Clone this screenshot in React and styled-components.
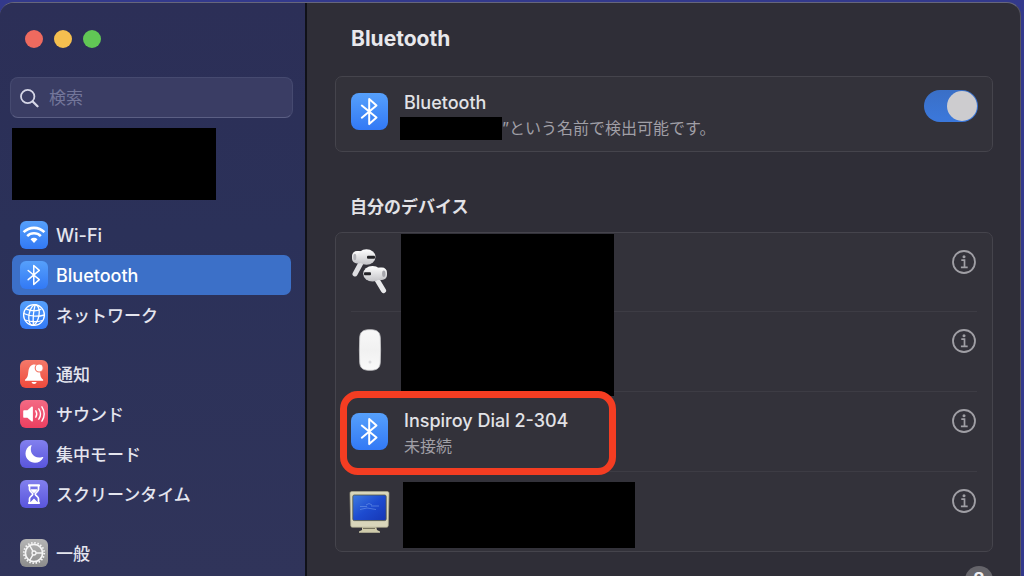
import React from "react";
import styled, { createGlobalStyle, css } from "styled-components";

const GlobalStyle = createGlobalStyle`
  *, *::before, *::after { box-sizing: border-box; }
  body {
    margin: 0;
    background: #33398c;
    color: #e2e2e6;
    font-family: Inter, "Noto Sans CJK JP", sans-serif;
    font-size: 18px;
    line-height: 24px;
  }
  h1, h2, h3, p, ul { margin: 0; padding: 0; }
  ul { list-style: none; }
  button { font: inherit; border: 0; padding: 0; background: none; cursor: pointer; }
`;

const Desktop = styled.div`
  height: 100vh;
  padding: 2px 3px 0 0;
  overflow: hidden;
`;

const Window = styled.div`
  display: flex;
  height: 100%;
  overflow: hidden;
  border-top: 1px solid #66667c;
  border-right: 1px solid #55545c;
  border-radius: 14px 14px 0 0;
  background: #2f2e37;
`;

const Sidebar = styled.aside`
  flex: 0 0 307px;
  padding: 27px 12px 0 10px;
  border-right: 2px solid #101118;
  background: linear-gradient(#2c2f57, #2b3159 40%, #30345a);
  overflow: hidden;
`;

const TrafficLights = styled.div`
  display: flex;
  gap: 11px;
  padding-left: 15px;
  margin-bottom: 29px;
`;

const Light = styled.button`
  width: 18px;
  height: 18px;
  border-radius: 50%;
  && { background: ${(p) => p.$color}; }
`;

const SearchBox = styled.label`
  display: flex;
  align-items: center;
  gap: 10px;
  height: 41px;
  padding: 0 9px;
  border: 1px solid #464a70;
  border-bottom-color: #5b5f84;
  border-radius: 8px;
  background: #3a3d64;
  svg { flex: none; }
`;

const SearchInput = styled.input`
  flex: 1;
  min-width: 0;
  padding: 0;
  border: 0;
  outline: 0;
  background: none;
  color: #e2e2e6;
  font: inherit;
  font-size: 17px;
  &::placeholder { color: #73769a; opacity: 1; }
`;

const AccountMask = styled.div`
  width: 204px;
  height: 72px;
  margin: 10px 0 15px 2px;
  background: #000;
`;

const NavGroup = styled.ul`
  margin-bottom: 19px;
  && { padding: 0 2px; }
`;

const NavLink = styled.a`
  display: flex;
  align-items: center;
  gap: 8px;
  height: 40px;
  padding: 0 8px;
  border-radius: 7px;
  color: #e4e5ee;
  text-decoration: none;
  font-size: ${(p) => (p.$latin ? 18 : 17)}px;
  font-weight: 500;
  ${(p) => p.$active && css`
    background: #3c70c8;
    color: #fff;
  `}
`;

const NavLabel = styled.span`
  padding-top: 2px;
`;

const Tile = styled.span`
  flex: none;
  display: flex;
  width: ${(p) => p.$size}px;
  height: ${(p) => p.$size}px;
  border-radius: ${(p) => (p.$size > 30 ? 8 : 6)}px;
  background: linear-gradient(${(p) => p.$from}, ${(p) => p.$to});
`;

const Main = styled.main`
  flex: 1;
  min-width: 0;
  padding: 23px 27px 0 28px;
  overflow: hidden;
`;

const Title = styled.h1`
  padding-left: 16px;
  margin-bottom: 24px;
  font-size: 21px;
  line-height: 26px;
  font-weight: 700;
  color: #e8e8ec;
`;

const Card = styled.section`
  position: relative;
  border: 1px solid #45444c;
  border-radius: 7px;
  background: #33323a;
`;

const StatusCard = styled(Card)`
  display: flex;
  align-items: flex-start;
  gap: 16px;
  min-height: 76px;
  padding: 13px 14px 0 15px;
  & > ${Tile} { margin-top: 3px; }
`;

const TextBlock = styled.div`
  flex: 1;
  min-width: 0;
`;

const Name = styled.h3`
  font-size: 18px;
  line-height: 26px;
  font-weight: 500;
`;

const Detail = styled.p`
  display: flex;
  align-items: center;
  font-size: 16px;
  line-height: 24px;
  color: #a09fa6;
`;

const NameMask = styled.span`
  width: 102px;
  height: 23px;
  margin-left: -4px;
  background: #000;
`;

const Switch = styled.input`
  appearance: none;
  display: flex;
  align-items: center;
  justify-content: flex-end;
  width: 54px;
  height: 32px;
  margin: 0;
  padding: 1px;
  border-radius: 16px;
  background: linear-gradient(#3a6fc6, #3b78dc);
  &::before {
    content: "";
    width: 30px;
    height: 30px;
    border-radius: 50%;
    background: #cdcccf;
  }
  &:not(:checked) { justify-content: flex-start; background: #55545c; }
`;

const SectionTitle = styled.h2`
  padding-left: 15px;
  margin: 43px 0 13px;
  font-size: 17px;
  line-height: 24px;
  font-weight: 700;
`;

const DeviceRow = styled.li`
  display: flex;
  align-items: center;
  gap: 16px;
  height: 80px;
  margin: 0 15px;
  & + & { border-top: 1px solid #3d3c44; }
  &:first-child { height: 78px; }
  & > ${TextBlock} { padding-top: 3px; }
`;

const DeviceArt = styled.span`
  flex: none;
  display: flex;
  justify-content: center;
  width: 37px;
  padding-bottom: ${(p) => (p.$raised ? 3 : 0)}px;
  svg { flex: none; }
`;

const InfoButton = styled.button`
  align-self: flex-start;
  width: 26px;
  height: 26px;
  margin-top: 16px;
`;

const Mask = styled.div`
  position: absolute;
  top: ${(p) => p.$top}px;
  left: ${(p) => p.$left}px;
  width: ${(p) => p.$width}px;
  height: ${(p) => p.$height}px;
  background: #000;
`;

const Highlight = styled.div`
  position: absolute;
  top: 158px;
  left: 4px;
  width: 276px;
  height: 84px;
  border: 7px solid #f43d22;
  border-radius: 18px;
  pointer-events: none;
`;

const Footer = styled.div`
  display: flex;
  justify-content: flex-end;
  margin-top: 14px;
`;

const HelpButton = styled.button`
  width: 28px;
  height: 28px;
  border-radius: 50%;
  && {
    background: #65646a;
    color: #f0f0f2;
    font-size: 20px;
    font-weight: 600;
    line-height: 28px;
  }
`;

const BLUE = ["#56a0fb", "#3279f5"];
const INDIGO = ["#8280ee", "#5955dc"];

const glyphs = {
  wifi: (
    <g fill="none" stroke="#fff" strokeWidth="2.6">
      <path d="M3.6 11.200a14.700 14.700 0 0 1 20.800 0" />
      <path d="M7.200 15.100a9.600 9.600 0 0 1 13.600 0" />
      <path d="M14 21.900l-3.500-3.600a5 5 0 0 1 7 0z" fill="#fff" stroke="none" />
    </g>
  ),
  network: (
    <g fill="none" stroke="#fff" strokeWidth="1.3">
      <circle cx="14" cy="14" r="10.400" />
      <ellipse cx="14" cy="14" rx="5" ry="10.400" transform="rotate(10 14 14)" />
      <path d="M15.200 3.700C13.500 10 12.800 17.500 13.400 24.400M3.800 12.500c6 2.800 14 3.300 20.500 1.500M5.800 7.800c5 2.200 11 2.600 15.500.4M5 19c5.500 2 12 2.200 17.500.5" />
    </g>
  ),
  bell: (
    <>
      <path d="M5.200 19.500c2.800-2 2.700-4.500 3.200-8.200.5-4 2.800-6.700 6-6.700 3.600 0 5.300 3 5.600 6.700.3 3.700.3 6.200 3 8.200.5.8.2 1.300-.7 1.300H5.800c-.9 0-1.100-.6-.6-1.300zM11.500 22h5.200c-.4 1.300-1.400 1.900-2.600 1.900s-2.200-.6-2.600-1.900z" fill="#fff" />
      <circle cx="19.200" cy="8" r="4" fill="#fff" stroke="#f3705f" strokeWidth="1.100" />
    </>
  ),
  sound: (
    <>
      <path d="M3.200 11.300c0-.7.400-1.100 1-1.100h3.200l4-3.500c.7-.6 1.500-.3 1.500.6v13.400c0 .9-.8 1.200-1.500.6l-4-3.500H4.200c-.6 0-1-.4-1-1.100z" fill="#fff" />
      <path d="M15.800 10.800c1.200 2 1.200 4.400 0 6.400M18.800 8.800c2.100 3.200 2.100 7.200 0 10.400M21.900 6.800c2.900 4.500 2.900 9.900 0 14.400" fill="none" stroke="#fff" strokeWidth="1.400" strokeLinecap="round" />
    </>
  ),
  moon: (
    <path d="M10.800 5.200c.6-.3 1 0 .7.600-2.400 5.800 1.600 12.400 8.900 11.700.9-.1 1.700-.3 2.200-.5.600-.2.900.2.600.700-1.600 3.100-4.600 5-8.200 5C9.800 22.700 5.500 18.700 5.500 13.500c0-3.700 2-6.900 5.300-8.300z" fill="#fff" />
  ),
  hourglass: (
    <g fill="none" stroke="#fff" strokeWidth="1.700" strokeLinejoin="round">
      <path d="M9 5.400h10M9 23h10" strokeWidth="2.200" strokeLinecap="round" />
      <path d="M9.500 6v3.600c0 2 3.200 3 3.200 4.600s-3.200 2.600-3.200 4.600V22M18.500 6v3.600c0 2-3.200 3-3.200 4.600s3.200 2.600 3.200 4.600V22" />
      <path d="M10.500 9.200h7c0 1.500-2.800 2.800-3.500 4.500-.7-1.700-3.500-3-3.500-4.500zM10.500 22l3.500-3.500 3.500 3.500z" fill="#fff" stroke="none" />
    </g>
  ),
  gear: (
    <g fill="none" stroke="#f5f5f5">
      <circle cx="14" cy="14" r="8.600" strokeWidth="1.700" />
      <circle cx="14" cy="14" r="10.200" strokeWidth="1.800" strokeDasharray="1.500 1.700" />
      <circle cx="14" cy="14" r="2" strokeWidth="1.300" />
      <path d="M16 14h6.600M13 12.300L9.700 6.600M13 15.700l-3.300 5.700" strokeWidth="1.400" />
    </g>
  ),
};

function BluetoothTile({ size }) {
  return (
    <Tile $size={size} $from={BLUE[0]} $to={BLUE[1]}>
      <svg width={size} height={size} viewBox="0 0 37 37" aria-hidden="true">
        <path
          d="M10.800 12.600L25.500 24.600l-7.300 6.500v-25.200L25.500 12.400 10.800 24.700"
          fill="none"
          stroke="#fff"
          strokeWidth="2"
          strokeLinejoin="round"
          strokeLinecap="round"
        />
      </svg>
    </Tile>
  );
}

function NavIcon({ name, colors }) {
  if (name === "bluetooth") return <BluetoothTile size={28} />;
  return (
    <Tile $size={28} $from={colors[0]} $to={colors[1]}>
      <svg width="28" height="28" viewBox="0 0 28 28" aria-hidden="true">{glyphs[name]}</svg>
    </Tile>
  );
}

function Info() {
  return (
    <InfoButton aria-label="情報">
      <svg width="26" height="26" viewBox="0 0 26 26" aria-hidden="true">
        <g fill="none" stroke="#a09fa5" strokeWidth="1.800">
          <circle cx="13" cy="13" r="11" />
          <path d="M10.300 11.200h3.200v7M9.900 18.300h6.800" strokeWidth="1.700" />
        </g>
        <circle cx="13" cy="7.700" r="1.500" fill="#a09fa5" />
      </svg>
    </InfoButton>
  );
}

function Earbuds() {
  return (
    <svg width="37" height="48" viewBox="0 0 37 48" aria-hidden="true">
      <defs>
        <linearGradient id="bud" x1="0" y1="0" x2="0" y2="1">
          <stop offset="0" stopColor="#fff" />
          <stop offset="1" stopColor="#c3c3c7" />
        </linearGradient>
      </defs>
      <path d="M10.500 15L4 27" stroke="#dedee1" strokeWidth="5" strokeLinecap="round" />
      <rect x="1" y="4" width="12" height="12.500" rx="5" fill="url(#bud)" />
      <ellipse cx="15.500" cy="10" rx="9" ry="7.800" fill="url(#bud)" />
      <ellipse cx="3.800" cy="10" rx="1.500" ry="3.300" fill="#b4b4b9" />
      <rect x="16" y="8.700" width="8" height="3" rx="1" fill="#222226" />
      <path d="M25 31l7.500 12.500" stroke="#e8e8ea" strokeWidth="5.200" strokeLinecap="round" />
      <rect x="24" y="20.500" width="12" height="12.500" rx="5" fill="url(#bud)" />
      <ellipse cx="21.500" cy="26.700" rx="9.300" ry="7.800" fill="url(#bud)" />
      <ellipse cx="32.800" cy="26.700" rx="1.700" ry="3.300" fill="#a6a6ac" />
      <rect x="13" y="25.200" width="7" height="3" rx="1" fill="#222226" />
    </svg>
  );
}

function Mouse() {
  return (
    <svg width="24" height="44" viewBox="0 0 24 44" aria-hidden="true">
      <defs>
        <linearGradient id="shell" x1="0" y1="0" x2="0" y2="1">
          <stop offset="0" stopColor="#f8f8f8" />
          <stop offset="0.500" stopColor="#f1f1f1" />
          <stop offset="1" stopColor="#fafafa" />
        </linearGradient>
      </defs>
      <path d="M12 1.700c7.500 0 10 2.300 10.300 8.300.4 8 .4 16 0 24-.3 6-2.800 8.300-10.300 8.300S2 40 1.700 34c-.4-8-.4-16 0-24C2 4 4.500 1.700 12 1.700z" fill="url(#shell)" stroke="#c9c9cc" strokeWidth=".8" />
      <circle cx="12" cy="34" r="1.500" fill="#dcdcdf" />
    </svg>
  );
}

function Monitor() {
  return (
    <svg width="41" height="44" viewBox="0 0 41 44" aria-hidden="true">
      <defs>
        <linearGradient id="screen" x1="0" y1="0" x2="1" y2="1">
          <stop offset="0" stopColor="#3f7be0" />
          <stop offset="0.500" stopColor="#1d4bd0" />
          <stop offset="1" stopColor="#1636b4" />
        </linearGradient>
      </defs>
      <path d="M13 36h14l1 4 3 1.500v1.200H10v-1.200l3-1.500z" fill="#cfcbab" />
      <path d="M3 1.500h35c1.500 0 2 .7 2 2L39.300 35c0 1.500-.6 2.300-2 2.300H3.700c-1.400 0-2-.8-2-2.300L1 3.500c0-1.300.5-2 2-2z" fill="#d9d6bb" stroke="#a9a68b" strokeWidth=".7" />
      <rect x="3.800" y="5" width="33.400" height="25.600" rx="1.500" fill="url(#screen)" stroke="#55583f" strokeWidth=".8" />
      <path d="M11 16.500h7M17 15l3-1.500 3 1.500M22 16h8M11 19.500l7-1.500 9 1.500" stroke="#6f97e8" strokeWidth=".6" fill="none" />
      <path d="M14 38.500h12" stroke="#77745f" strokeWidth="1" />
    </svg>
  );
}

const navGroups = [
  [
    { label: "Wi-Fi", icon: "wifi", colors: BLUE, latin: true },
    { label: "Bluetooth", icon: "bluetooth", latin: true, active: true },
    { label: "ネットワーク", icon: "network", colors: BLUE },
  ],
  [
    { label: "通知", icon: "bell", colors: ["#f5796a", "#ee4a3c"] },
    { label: "サウンド", icon: "sound", colors: ["#f36a84", "#ec3f60"] },
    { label: "集中モード", icon: "moon", colors: INDIGO },
    { label: "スクリーンタイム", icon: "hourglass", colors: INDIGO },
  ],
  [{ label: "一般", icon: "gear", colors: ["#b5b5b5", "#8c8c8c"] }],
];

const devices = [
  { id: "earbuds", art: <Earbuds />, raised: true },
  { id: "mouse", art: <Mouse />, raised: true },
  { id: "dial", art: <BluetoothTile size={37} />, name: "Inspiroy Dial 2-304", status: "未接続" },
  { id: "monitor", art: <Monitor /> },
];

export default function App() {
  return (
    <Desktop>
      <GlobalStyle />
      <Window>
        <Sidebar>
          <TrafficLights>
            <Light $color="#ee6a5f" aria-label="閉じる" />
            <Light $color="#f5bf4f" aria-label="しまう" />
            <Light $color="#61c755" aria-label="拡大" />
          </TrafficLights>
          <SearchBox>
            <svg width="19" height="20" viewBox="0 0 19 20" fill="none" stroke="#d5d6e6" strokeLinecap="round" aria-hidden="true">
              <circle cx="7.700" cy="8.500" r="6.700" strokeWidth="1.800" />
              <path d="M12.700 13.500l4.800 4.800" strokeWidth="2.300" />
            </svg>
            <SearchInput type="search" placeholder="検索" aria-label="検索" />
          </SearchBox>
          <AccountMask />
          <nav>
            {navGroups.map((group, i) => (
              <NavGroup key={i}>
                {group.map((item) => (
                  <li key={item.label}>
                    <NavLink
                      href="#"
                      $latin={item.latin}
                      $active={item.active}
                      aria-current={item.active ? "page" : undefined}
                    >
                      <NavIcon name={item.icon} colors={item.colors} />
                      <NavLabel>{item.label}</NavLabel>
                    </NavLink>
                  </li>
                ))}
              </NavGroup>
            ))}
          </nav>
        </Sidebar>
        <Main>
          <Title>Bluetooth</Title>
          <StatusCard>
            <BluetoothTile size={37} />
            <TextBlock>
              <Name as="label" htmlFor="power">Bluetooth</Name>
              <Detail>
                <NameMask />
                ”という名前で検出可能です。
              </Detail>
            </TextBlock>
            <Switch id="power" type="checkbox" role="switch" defaultChecked />
          </StatusCard>
          <SectionTitle>自分のデバイス</SectionTitle>
          <Card>
            <ul>
              {devices.map((device) => (
                <DeviceRow key={device.id}>
                  <DeviceArt $raised={device.raised}>{device.art}</DeviceArt>
                  <TextBlock>
                    {device.name && <Name>{device.name}</Name>}
                    {device.status && <Detail>{device.status}</Detail>}
                  </TextBlock>
                  <Info />
                </DeviceRow>
              ))}
            </ul>
            <Mask $top={1} $left={65} $width={213} $height={162} />
            <Mask $top={249} $left={67} $width={232} $height={66} />
            <Highlight />
          </Card>
          <Footer>
            <HelpButton aria-label="ヘルプ">?</HelpButton>
          </Footer>
        </Main>
      </Window>
    </Desktop>
  );
}
